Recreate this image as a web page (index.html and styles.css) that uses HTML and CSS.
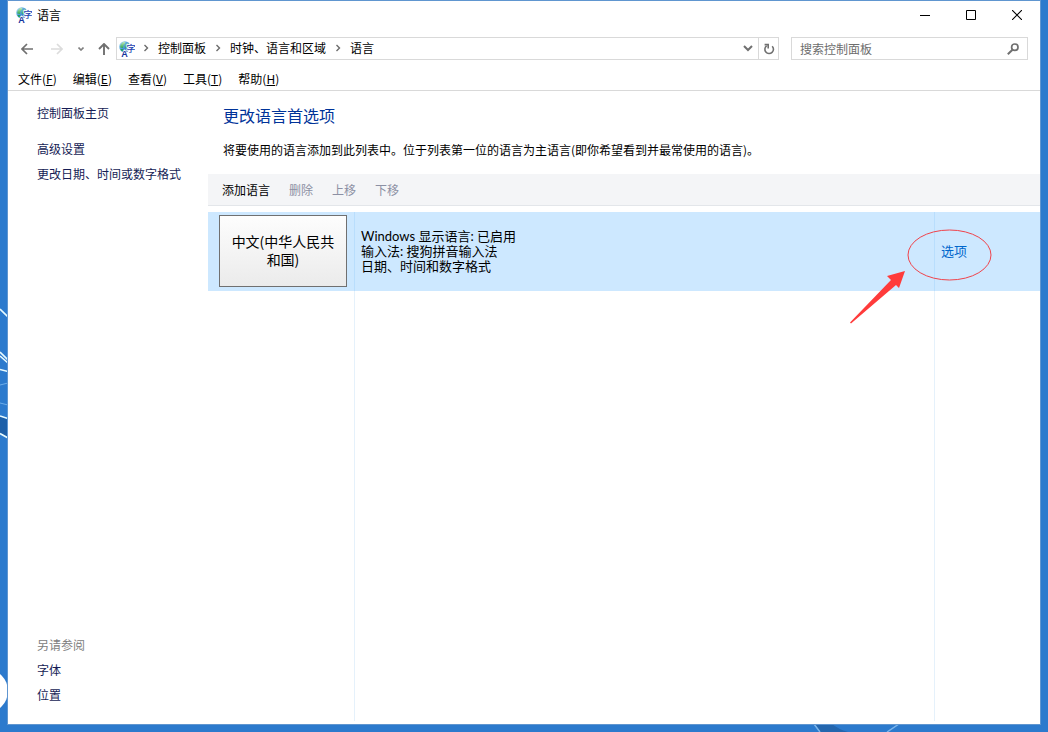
FILE: index.html
```html
<!DOCTYPE html>
<html lang="zh-CN">
<head>
<meta charset="utf-8">
<title>语言</title>
<link rel="stylesheet" href="styles.css">
</head>
<body>
<svg class="defs" aria-hidden="true">
  <defs>
    <linearGradient id="ocean" x1="0" y1="0" x2="1" y2="1">
      <stop offset="0" stop-color="#b9e6f5"/>
      <stop offset=".45" stop-color="#4d9fdc"/>
      <stop offset="1" stop-color="#1746a4"/>
    </linearGradient>
    <linearGradient id="land" x1="0" y1="0" x2="0" y2="1">
      <stop offset="0" stop-color="#c4ecc0"/>
      <stop offset="1" stop-color="#22a045"/>
    </linearGradient>
    <symbol id="globe" viewBox="0 0 16 16">
      <circle cx="5.800" cy="5.800" r="5.600" fill="url(#ocean)"/>
      <path d="M1.500 4 4 1l2.500-.3L6 2.500 4.500 4.500 4 7 1.200 6.500zM6.500 3.500 9 2l1.500 2L9.500 6 7.500 7.500 5.500 6z" fill="url(#land)"/>
      <path d="M1.500 8 4 8.300l.8 2.200-2-.3z" fill="#22a045"/>
      <text x="2.200" y="15.800" class="globe-latin">A</text>
      <text x="7.600" y="11.400" class="globe-han">字</text>
    </symbol>
    <symbol id="crumb" viewBox="0 0 6 8">
      <path d="M1.500 1 4.500 4 1.500 7" fill="none" stroke="#6b6b6b" stroke-width="1.400"/>
    </symbol>
  </defs>
</svg>
<svg class="wallpaper-left" viewBox="0 0 8 732" aria-hidden="true">
  <path d="M0 416 8 420V439L0 434z" fill="#1c5fa8"/>
  <g fill="none" stroke="#e8fbff" stroke-width="1.600">
    <path d="M0 309 8 317M0 352 8 360M0 356 8 363M0 369.500 8 371.500M0 416 8 418.500M0 433.500 8 438"/>
  </g>
  <path d="M0 385 8 383M0 403 8 405" stroke="#6faee8" fill="none"/>
  <circle cx="-14" cy="691" r="22" fill="#fff"/>
</svg>
<svg class="wallpaper-bottom" viewBox="0 0 120 8" aria-hidden="true">
  <path d="M7 0H24Q30 5 40 8H12z" fill="#2466ae"/>
  <path d="M6 0 12 8M91 0 79 8" stroke="#7db5ea" stroke-width="1.500"/>
</svg>

<div class="window">
  <header class="titlebar">
    <svg class="app-icon"><use href="#globe"/></svg>
    <h1 class="window-title">语言</h1>
    <div class="window-buttons">
      <button type="button" class="window-button" aria-label="最小化"><svg width="10" height="10" viewBox="0 0 10 10"><path d="M0 5.500H10" stroke="#000"/></svg></button>
      <button type="button" class="window-button" aria-label="最大化"><svg width="10" height="10" viewBox="0 0 10 10"><path d="M.5.5h9v9h-9z" fill="none" stroke="#000"/></svg></button>
      <button type="button" class="window-button" aria-label="关闭"><svg width="10" height="10" viewBox="0 0 10 10"><path d="M0 0 10 10M10 0 0 10" stroke="#000" stroke-width="1.100"/></svg></button>
    </div>
  </header>

  <div class="navbar">
    <div class="nav-buttons">
      <button type="button" class="icon-button back" aria-label="后退"><svg width="12" height="12" viewBox="0 0 12 12"><path d="M12 6H1M6 1 1 6l5 5" fill="none" stroke="#707070" stroke-width="1.700"/></svg></button>
      <button type="button" class="icon-button" aria-label="前进" disabled><svg width="12" height="12" viewBox="0 0 12 12"><path d="M0 6h11M6 1l5 5-5 5" fill="none" stroke="#dcdcdc" stroke-width="1.700"/></svg></button>
      <button type="button" class="icon-button recent" aria-label="最近位置"><svg width="6" height="4" viewBox="0 0 6 4"><path d="M.5.5 3 3 5.500.5" fill="none" stroke="#808080" stroke-width="1.600"/></svg></button>
      <button type="button" class="icon-button up" aria-label="上移一级"><svg width="12" height="12" viewBox="0 0 12 12"><path d="M6 12V1M1 6l5-5 5 5" fill="none" stroke="#707070" stroke-width="1.900"/></svg></button>
    </div>
    <div class="address">
      <svg class="app-icon"><use href="#globe"/></svg>
      <nav class="crumbs" aria-label="路径">
        <svg class="crumb-arrow"><use href="#crumb"/></svg>
        <a href="#panel">控制面板</a>
        <svg class="crumb-arrow"><use href="#crumb"/></svg>
        <a href="#region">时钟、语言和区域</a>
        <svg class="crumb-arrow"><use href="#crumb"/></svg>
        <a href="#language">语言</a>
      </nav>
      <button type="button" class="address-button" aria-label="展开"><svg width="10" height="7" viewBox="0 0 10 7"><path d="M1 1 5 5 9 1" fill="none" stroke="#707070" stroke-width="2"/></svg></button>
      <button type="button" class="address-button divided" aria-label="刷新"><svg width="12" height="12" viewBox="0 0 12 12"><path d="M9.200 3.200A4.300 4.300 0 1 1 3.600 2.800" fill="none" stroke="#707070" stroke-width="1.600"/><path d="M1.600 1.600H5.200V5.400" fill="none" stroke="#707070" stroke-width="1.600"/></svg></button>
    </div>
    <label class="search">
      <input type="search" placeholder="搜索控制面板" aria-label="搜索控制面板">
      <svg width="12" height="12" viewBox="0 0 12 12"><circle cx="7.800" cy="4.200" r="3.200" fill="none" stroke="#707070" stroke-width="1.700"/><path d="M5.500 6.700.8 11.200" stroke="#707070" stroke-width="2"/></svg>
    </label>
  </div>

  <div class="menubar">
    <button type="button">文件(<u>F</u>)</button>
    <button type="button">编辑(<u>E</u>)</button>
    <button type="button">查看(<u>V</u>)</button>
    <button type="button">工具(<u>T</u>)</button>
    <button type="button">帮助(<u>H</u>)</button>
  </div>

  <div class="content">
    <aside class="sidebar">
      <a class="home" href="#home">控制面板主页</a>
      <a href="#advanced">高级设置</a>
      <a href="#formats">更改日期、时间或数字格式</a>
      <div class="see-also">
        <span>另请参阅</span>
        <a href="#fonts">字体</a>
        <a href="#location">位置</a>
      </div>
    </aside>
    <main class="main">
      <h2 class="heading">更改语言首选项</h2>
      <p class="intro">将要使用的语言添加到此列表中。位于列表第一位的语言为主语言(即你希望看到并最常使用的语言)。</p>
      <div class="toolbar">
        <button type="button">添加语言</button>
        <button type="button" disabled>删除</button>
        <button type="button" disabled>上移</button>
        <button type="button" disabled>下移</button>
      </div>
      <div class="languages">
        <div class="language selected">
          <div class="cell"><button type="button" class="tile">中文(中华人民共和国)</button></div>
          <div class="cell details">
            <span>Windows 显示语言: 已启用</span>
            <span>输入法: 搜狗拼音输入法</span>
            <span>日期、时间和数字格式</span>
          </div>
          <div class="cell options"><a href="#options">选项</a></div>
          <svg class="callout" viewBox="0 0 146 98" aria-hidden="true">
            <ellipse cx="101.500" cy="27" rx="41.500" ry="25" fill="none" stroke="#f0434b"/>
            <path d="M57 43 39 48l4 4L2 94.500l1 1L48 57l3 3z" fill="#ff3b3b"/>
          </svg>
        </div>
        <div class="language empty">
          <div class="cell"></div>
          <div class="cell"></div>
          <div class="cell"></div>
        </div>
      </div>
    </main>
  </div>
</div>
</body>
</html>
```
FILE: styles.css
```css
* {
  box-sizing: border-box;
}

body {
  margin: 0;
  min-height: 100vh;
  padding: 0 7px 7px;
  display: flex;
  position: relative;
  overflow: hidden;
  background: #2c7acd;
  color: #000;
  font: 12px/18px "Noto Sans CJK SC", sans-serif;
}

button,
input {
  font: inherit;
  color: inherit;
  margin: 0;
  padding: 0;
  border: 0;
  background: none;
}

a {
  color: inherit;
  text-decoration: none;
}

svg {
  display: block;
  flex: none;
}

.defs {
  position: absolute;
  width: 0;
  height: 0;
}

.globe-latin {
  font: bold 9px "Liberation Sans", sans-serif;
  fill: #16329c;
  stroke: #fff;
  stroke-width: 1.5px;
  paint-order: stroke;
}

.globe-han {
  font: 500 9px "Noto Sans CJK SC", sans-serif;
  fill: #1c3fb0;
  stroke: #fff;
  stroke-width: 1.5px;
  paint-order: stroke;
}

.wallpaper-left {
  position: absolute;
  left: 0;
  top: 0;
  width: 8px;
  height: 732px;
}

.wallpaper-bottom {
  position: absolute;
  right: 120px;
  bottom: 0;
  width: 120px;
  height: 8px;
}

.window {
  position: relative;
  flex: 1;
  min-width: 0;
  display: flex;
  flex-direction: column;
  border: 1px solid #6096d0;
  background: #fff;
}

.titlebar {
  display: flex;
  align-items: center;
  height: 28px;
  padding-left: 8px;
  gap: 5px;
}

.app-icon {
  width: 16px;
  height: 16px;
}

.window-title {
  margin: 0;
  font-size: 12px;
  font-weight: 400;
}

.window-buttons {
  margin-left: auto;
  display: flex;
}

.window-button {
  width: 46px;
  height: 28px;
  display: grid;
  place-items: center;
}

.navbar {
  display: flex;
  align-items: center;
  padding: 8px 12px 0 8px;
}

.nav-buttons {
  display: flex;
  align-items: center;
}

.icon-button {
  width: 22px;
  height: 22px;
  display: grid;
  place-items: center;
}

.icon-button.back {
  margin-right: 8px;
}

.icon-button.recent {
  width: 26px;
}

.icon-button.up {
  width: 20px;
}

.address {
  flex: 1;
  min-width: 0;
  height: 23px;
  margin: 0 12px 0 2px;
  padding-left: 2px;
  display: flex;
  align-items: center;
  border: 1px solid #d9d9d9;
}

.crumbs {
  flex: 1;
  display: flex;
  align-items: center;
  gap: 9px;
  padding-left: 8px;
  line-height: 16px;
  padding-bottom: 1px;
  white-space: nowrap;
}

.crumb-arrow {
  width: 6px;
  height: 8px;
}

.address-button {
  width: 20px;
  height: 21px;
  display: grid;
  place-items: center;
}

.address-button.divided {
  border-left: 1px solid #d9d9d9;
}

.search {
  width: 237px;
  height: 23px;
  padding: 0 8px;
  display: flex;
  align-items: center;
  border: 1px solid #d9d9d9;
}

.search input {
  flex: 1;
  min-width: 0;
  outline: 0;
}

.search input::placeholder {
  color: #6d6d6d;
  opacity: 1;
}

.menubar {
  display: flex;
  gap: 16px;
  padding: 10px 10px 2px;
  border-bottom: 1px solid #d9d9d9;
}

.menubar u {
  text-underline-offset: 1px;
}

.content {
  flex: 1;
  display: flex;
}

.sidebar {
  width: 200px;
  padding: 13px 10px 20px 29px;
  display: flex;
  flex-direction: column;
  align-items: flex-start;
  gap: 7px;
  color: #151c55;
}

.sidebar .home {
  margin-bottom: 11px;
}

.see-also {
  margin-top: auto;
  display: flex;
  flex-direction: column;
  gap: 7px;
}

.see-also span {
  color: #808080;
}

.main {
  flex: 1;
  min-width: 0;
  display: flex;
  flex-direction: column;
  padding-bottom: 3px;
}

.heading {
  margin: 12px 15px 0;
  font-size: 16px;
  line-height: 24px;
  font-weight: 400;
  color: #003399;
}

.intro {
  margin: 14px 15px 15px;
}

.toolbar {
  height: 32px;
  display: flex;
  align-items: center;
  gap: 19px;
  padding: 0 14px;
  background: #f4f5f7;
  border-bottom: 1px solid #e3e6ea;
}

.toolbar button:disabled {
  color: #8c90a4;
}

.languages {
  flex: 1;
  margin-top: 6px;
  display: flex;
  flex-direction: column;
}

.language {
  position: relative;
  display: grid;
  grid-template-columns: 147px 1fr 105px;
}

.language.selected {
  min-height: 79px;
  background: #cde8ff;
}

.language.empty {
  flex: 1;
}

.cell {
  border-right: 1px solid #e5f1fb;
}

.selected .cell {
  border-color: #b9defd;
}

.language .cell:last-of-type {
  border-right: 0;
}

.selected .cell:first-child {
  padding: 3px 7px 4px 11px;
}

.tile {
  width: 100%;
  height: 72px;
  padding: 0 10px 2px;
  border: 1px solid #707070;
  background: linear-gradient(#fdfdfd, #ebebeb);
  font-size: 14px;
  line-height: 18px;
}

.details {
  display: flex;
  flex-direction: column;
  justify-content: center;
  padding-left: 6px;
  font-family: Lato, "Noto Sans CJK SC", sans-serif;
  font-size: 13px;
  line-height: 15px;
}

.options {
  display: flex;
  align-items: center;
  padding: 0 0 2px 6px;
  font-size: 13px;
  color: #0066cc;
}

.callout {
  position: absolute;
  right: 46px;
  top: 16px;
  width: 146px;
  height: 98px;
  z-index: 1;
  pointer-events: none;
}
```
